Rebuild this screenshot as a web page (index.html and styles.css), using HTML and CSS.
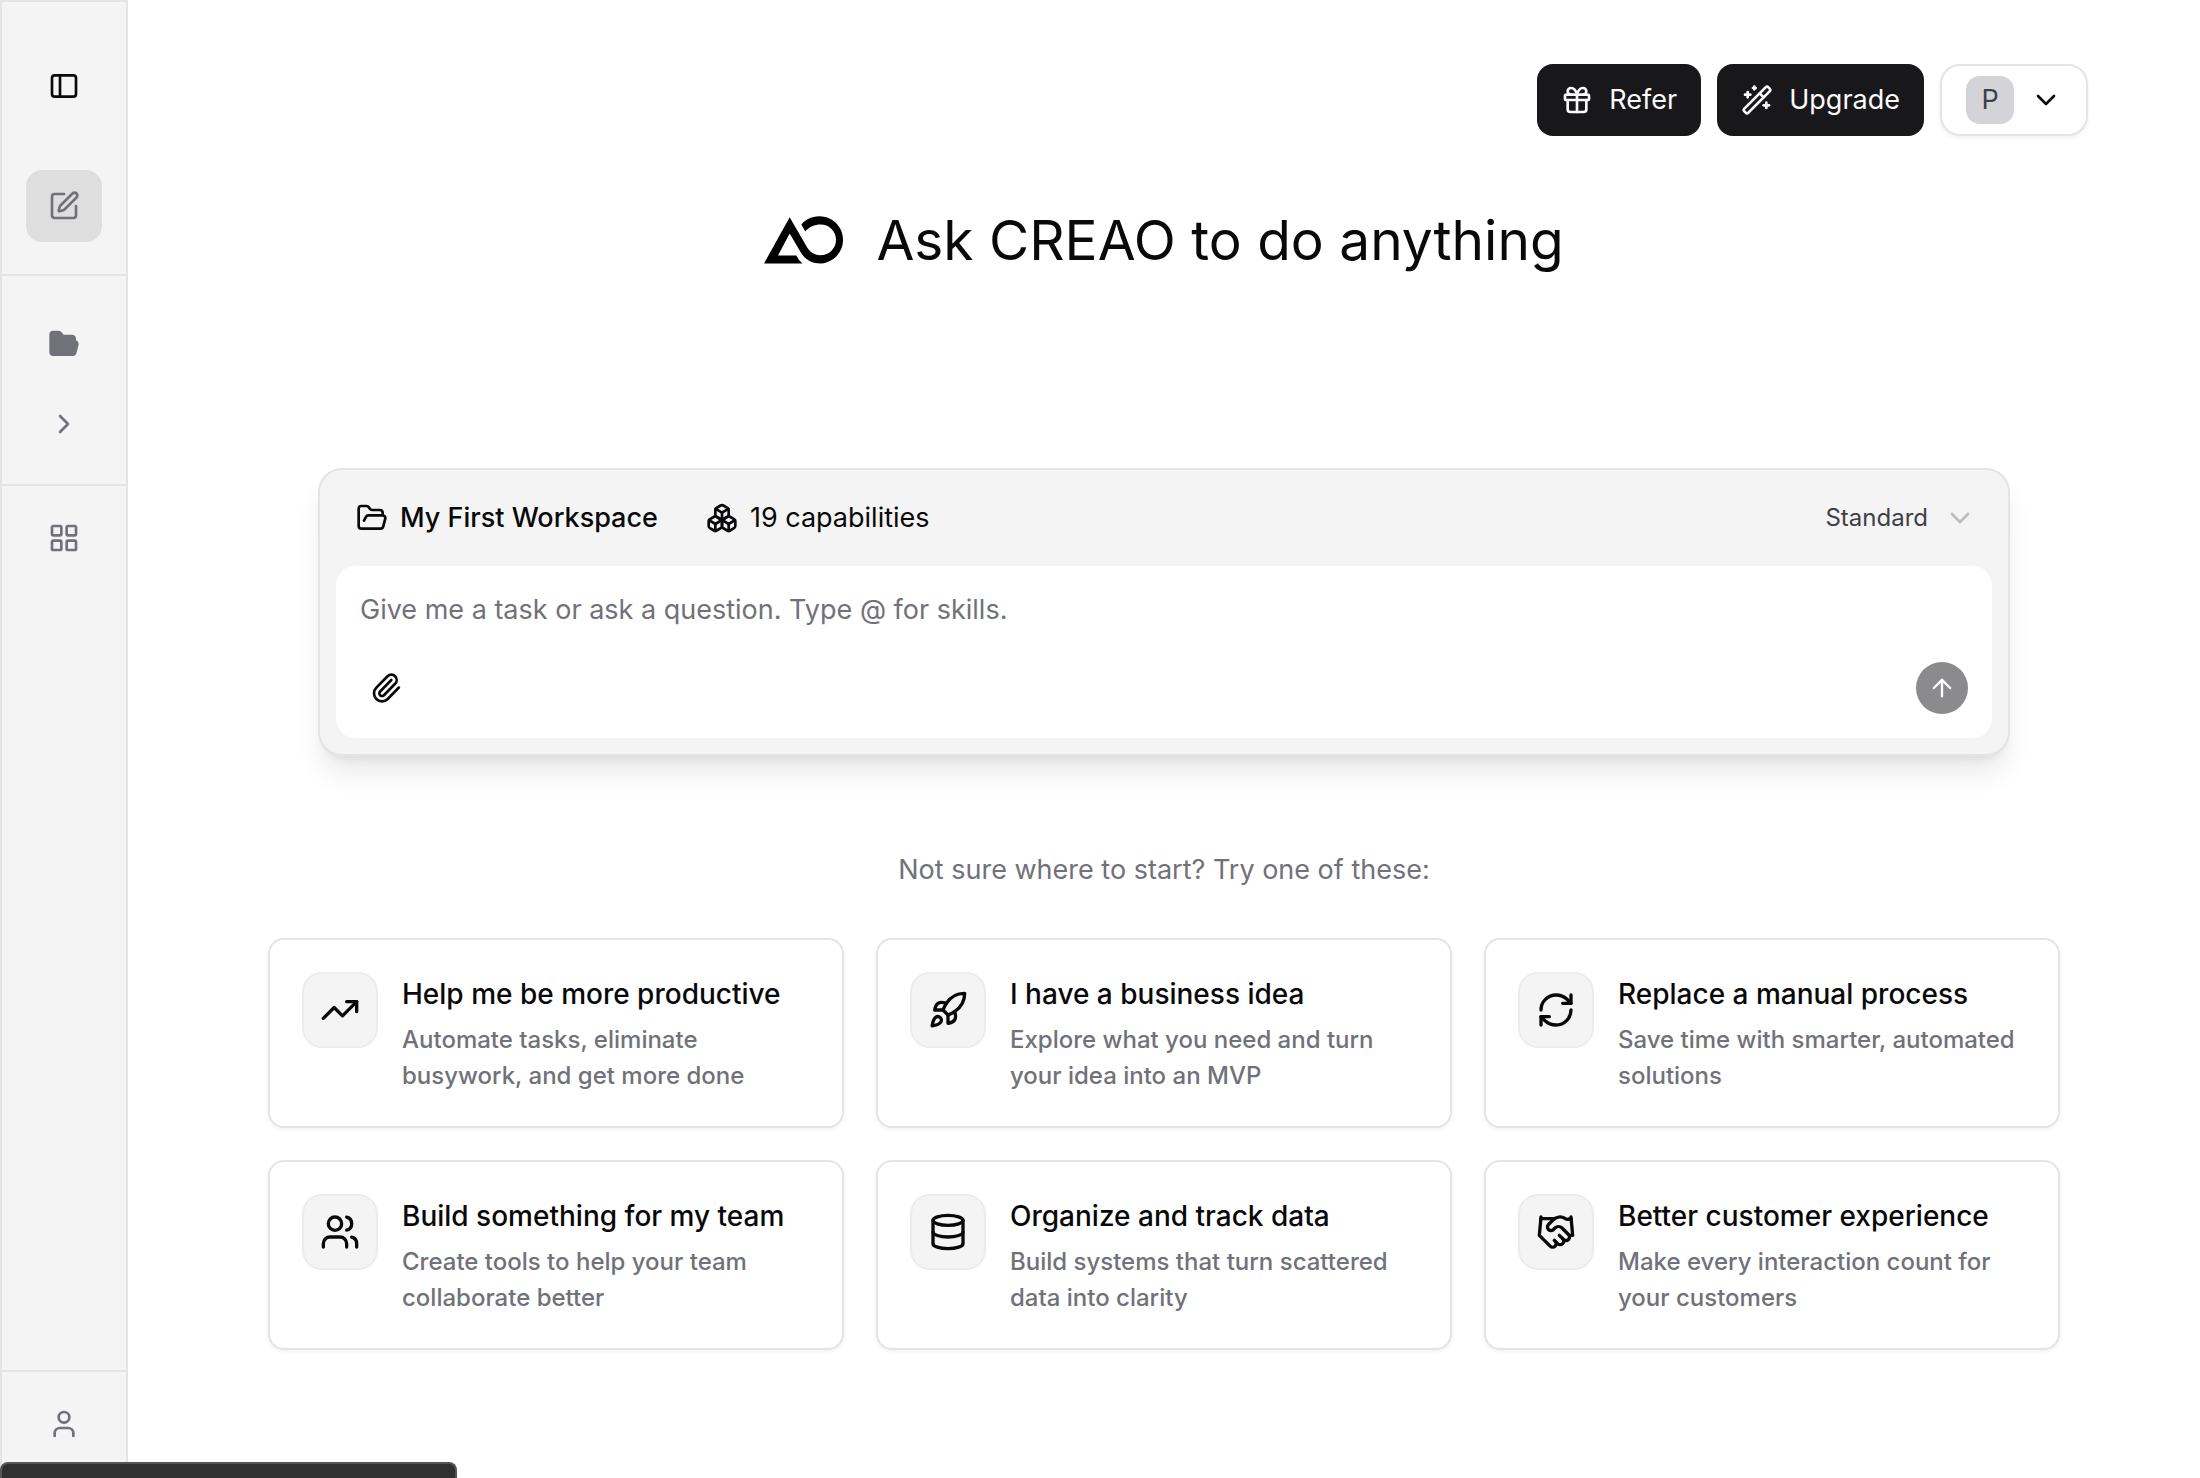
FILE: index.html
```html
<!DOCTYPE html>
<html lang="en">
<head>
	<meta charset="UTF-8">
	<title>CREAO</title>
	<link rel="stylesheet" href="styles.css">
</head>
<body>
	<svg class="sprite" aria-hidden="true">
		<symbol id="chevron-down" viewBox="0 0 24 24"><path d="m6 9 6 6 6-6"/></symbol>
	</svg>

	<aside class="sidebar">
		<div class="side-top">
			<button class="side-btn dark" aria-label="Toggle sidebar">
				<svg class="icon" viewBox="0 0 24 24"><rect width="18" height="16" x="3" y="4" rx="2"/><path d="M9 4v16"/></svg>
			</button>
			<button class="side-btn active" aria-label="New chat">
				<svg class="icon" viewBox="0 0 24 24"><path d="M12 3H5a2 2 0 0 0-2 2v14a2 2 0 0 0 2 2h14a2 2 0 0 0 2-2v-7"/><path d="M18.375 2.625a1 1 0 0 1 3 3l-9.013 9.014a2 2 0 0 1-.853.505l-2.873.84a.5.5 0 0 1-.62-.62l.84-2.873a2 2 0 0 1 .506-.852z"/></svg>
			</button>
		</div>
		<div class="side-folders">
			<button class="side-btn" aria-label="Workspace">
				<svg class="icon filled" viewBox="0 0 24 24"><path d="m6 14 1.5-2.9A2 2 0 0 1 9.24 10H20a2 2 0 0 1 1.94 2.5l-1.54 6a2 2 0 0 1-1.95 1.5H4a2 2 0 0 1-2-2V5a2 2 0 0 1 2-2h3.9a2 2 0 0 1 1.69.9l.81 1.2a2 2 0 0 0 1.67.9H18a2 2 0 0 1 2 2v2"/></svg>
			</button>
			<button class="side-btn" aria-label="Expand">
				<svg class="icon" viewBox="0 0 24 24"><path d="m9 18 6-6-6-6"/></svg>
			</button>
		</div>
		<div class="side-apps">
			<button class="side-btn" aria-label="Apps">
				<svg class="icon" viewBox="0 0 24 24"><rect width="7" height="7" x="3" y="3" rx="1"/><rect width="7" height="7" x="14" y="3" rx="1"/><rect width="7" height="7" x="14" y="14" rx="1"/><rect width="7" height="7" x="3" y="14" rx="1"/></svg>
			</button>
		</div>
		<div class="side-bottom">
			<button class="side-btn" aria-label="Account">
				<svg class="icon" viewBox="0 0 24 24"><path d="M19 21v-2a4 4 0 0 0-4-4H9a4 4 0 0 0-4 4v2"/><circle cx="12" cy="7" r="4"/></svg>
			</button>
		</div>
	</aside>

	<main class="main">
		<header class="topbar">
			<button class="btn">
				<svg class="icon" viewBox="0 0 24 24"><rect x="3" y="8" width="18" height="4" rx="1"/><path d="M12 8v13"/><path d="M19 12v7a2 2 0 0 1-2 2H7a2 2 0 0 1-2-2v-7"/><path d="M7.5 8a2.5 2.5 0 0 1 0-5A4.8 8 0 0 1 12 8a4.8 8 0 0 1 4.5-5 2.5 2.5 0 0 1 0 5"/></svg>
				Refer
			</button>
			<button class="btn">
				<svg class="icon" viewBox="0 0 24 24"><path d="m21.64 3.64-1.28-1.28a1.21 1.21 0 0 0-1.72 0L2.36 18.64a1.21 1.21 0 0 0 0 1.72l1.28 1.28a1.2 1.2 0 0 0 1.72 0L21.64 5.36a1.2 1.2 0 0 0 0-1.72"/><path d="m14 7 3 3"/><path d="M5 6v4"/><path d="M19 14v4"/><path d="M10 2v2"/><path d="M7 8H3"/><path d="M21 16h-4"/><path d="M11 3H9"/></svg>
				Upgrade
			</button>
			<button class="profile" aria-label="Profile">
				<span class="avatar">P</span>
				<svg class="icon"><use href="#chevron-down"/></svg>
			</button>
		</header>

		<h1 class="title">
			<svg class="logo" viewBox="30 45 240 143"><path d="M107 48 30 187h115q-10-8-18-24H72l35-66 34 58c14 22 34 32 59 32a71 71 0 1 0-58-117l12 21c11-14 28-21 46-21a46 46 0 1 1 0 92c-18 0-30-7-40-22z"/></svg>
			Ask CREAO to do anything
		</h1>

		<section class="composer">
			<div class="composer-head">
				<button class="pick strong">
					<svg class="icon" viewBox="0 0 24 24"><path d="m6 14 1.5-2.9A2 2 0 0 1 9.24 10H20a2 2 0 0 1 1.94 2.5l-1.54 6a2 2 0 0 1-1.95 1.5H4a2 2 0 0 1-2-2V5a2 2 0 0 1 2-2h3.9a2 2 0 0 1 1.69.9l.81 1.2a2 2 0 0 0 1.67.9H18a2 2 0 0 1 2 2v2"/></svg>
					My First Workspace
				</button>
				<button class="pick">
					<svg class="icon" viewBox="0 0 24 24"><path d="M2.97 12.92A2 2 0 0 0 2 14.63v3.24a2 2 0 0 0 .97 1.71l3 1.8a2 2 0 0 0 2.06 0L12 19v-5.5l-5-3-4.03 2.42Z"/><path d="m7 16.5-4.74-2.85"/><path d="m7 16.5 5-3"/><path d="M7 16.5v5.17"/><path d="M12 13.5V19l3.97 2.38a2 2 0 0 0 2.06 0l3-1.8a2 2 0 0 0 .97-1.71v-3.24a2 2 0 0 0-.97-1.71L17 10.5l-5 3Z"/><path d="m17 16.5-5-3"/><path d="m17 16.5 4.74-2.85"/><path d="M17 16.5v5.17"/><path d="M7.97 4.42A2 2 0 0 0 7 6.13v4.37l5 3 5-3V6.13a2 2 0 0 0-.97-1.71l-3-1.8a2 2 0 0 0-2.06 0l-3 1.8Z"/><path d="M12 8 7.26 5.15"/><path d="m12 8 4.74-2.85"/><path d="M12 13.5V8"/></svg>
					19 capabilities
				</button>
				<button class="mode">
					Standard
					<svg class="icon"><use href="#chevron-down"/></svg>
				</button>
			</div>
			<div class="composer-body">
				<textarea class="prompt" rows="1" aria-label="Task" placeholder="Give me a task or ask a question. Type @ for skills."></textarea>
				<div class="composer-tools">
					<button class="attach" aria-label="Attach a file">
						<svg class="icon" viewBox="0 0 24 24"><path d="m16 6-8.414 8.586a2 2 0 0 0 2.829 2.829l8.414-8.586a4 4 0 1 0-5.657-5.657l-8.379 8.551a6 6 0 1 0 8.485 8.485l8.379-8.551"/></svg>
					</button>
					<button class="send" aria-label="Send">
						<svg class="icon" viewBox="0 0 24 24"><path d="m5 12 7-7 7 7"/><path d="M12 19V5"/></svg>
					</button>
				</div>
			</div>
		</section>

		<p class="hint">Not sure where to start? Try one of these:</p>

		<div class="cards">
			<button class="card">
				<span class="card-icon"><svg class="icon" viewBox="0 0 24 24"><path d="M16 7h6v6"/><path d="m22 7-8.5 8.5-5-5L2 17"/></svg></span>
				<span class="card-text"><b>Help me be more productive</b><span>Automate tasks, eliminate busywork, and get more done</span></span>
			</button>
			<button class="card">
				<span class="card-icon"><svg class="icon" viewBox="0 0 24 24"><path d="M4.5 16.5c-1.5 1.26-2 5-2 5s3.74-.5 5-2c.71-.84.7-2.13-.09-2.91a2.18 2.18 0 0 0-2.91-.09z"/><path d="m12 15-3-3a22 22 0 0 1 2-3.95A12.88 12.88 0 0 1 22 2c0 2.72-.78 7.5-6 11a22.35 22.35 0 0 1-4 2z"/><path d="M9 12H4s.55-3.03 2-4c1.62-1.08 5 0 5 0"/><path d="M12 15v5s3.03-.55 4-2c1.08-1.62 0-5 0-5"/></svg></span>
				<span class="card-text"><b>I have a business idea</b><span>Explore what you need and turn your idea into an MVP</span></span>
			</button>
			<button class="card">
				<span class="card-icon"><svg class="icon" viewBox="0 0 24 24"><path d="M3 12a9 9 0 0 1 9-9 9.75 9.75 0 0 1 6.74 2.74L21 8"/><path d="M21 3v5h-5"/><path d="M21 12a9 9 0 0 1-9 9 9.75 9.75 0 0 1-6.74-2.74L3 16"/><path d="M8 16H3v5"/></svg></span>
				<span class="card-text"><b>Replace a manual process</b><span>Save time with smarter, automated solutions</span></span>
			</button>
			<button class="card">
				<span class="card-icon"><svg class="icon" viewBox="0 0 24 24"><path d="M16 21v-2a4 4 0 0 0-4-4H6a4 4 0 0 0-4 4v2"/><path d="M16 3.128a4 4 0 0 1 0 7.744"/><path d="M22 21v-2a4 4 0 0 0-3-3.87"/><circle cx="9" cy="7" r="4"/></svg></span>
				<span class="card-text"><b>Build something for my team</b><span>Create tools to help your team collaborate better</span></span>
			</button>
			<button class="card">
				<span class="card-icon"><svg class="icon" viewBox="0 0 24 24"><ellipse cx="12" cy="5" rx="9" ry="3"/><path d="M3 5v14a9 3 0 0 0 18 0V5"/><path d="M3 12a9 3 0 0 0 18 0"/></svg></span>
				<span class="card-text"><b>Organize and track data</b><span>Build systems that turn scattered data into clarity</span></span>
			</button>
			<button class="card">
				<span class="card-icon"><svg class="icon" viewBox="0 0 24 24"><path d="m11 17 2 2a1 1 0 1 0 3-3"/><path d="m14 14 2.5 2.5a1 1 0 1 0 3-3l-3.88-3.88a3 3 0 0 0-4.24 0l-.88.88a1 1 0 1 1-3-3l2.81-2.81a5.79 5.79 0 0 1 7.06-.87l.47.28a2 2 0 0 0 1.42.25L21 4"/><path d="m21 3 1 11h-2"/><path d="M3 3 2 14l6.5 6.5a1 1 0 1 0 3-3"/><path d="M3 4h8"/></svg></span>
				<span class="card-text"><b>Better customer experience</b><span>Make every interaction count for your customers</span></span>
			</button>
		</div>
	</main>

	<div class="status-bar"></div>
</body>
</html>
```
FILE: styles.css
```css
*{ box-sizing: border-box; margin: 0; padding: 0; }
body{ display: flex; height: 100vh; overflow: hidden; background: #fff; color: #09090b; font-family: Inter, "Liberation Sans", sans-serif; font-size: 27px; line-height: 40px; }
button{ border: 0; background: none; color: inherit; font: inherit; cursor: pointer; display: flex; align-items: center; }
.sprite{ display: none; }
.icon{ width: 32px; height: 32px; flex: none; fill: none; stroke: currentColor; stroke-width: 2; stroke-linecap: round; stroke-linejoin: round; }

/* sidebar */
.sidebar{ display: flex; flex-direction: column; flex: none; width: 128px; background: #f4f4f4; border: 2px solid #e4e4e7; border-bottom: 0; color: #71717a; }
.side-top, .side-folders, .side-apps, .side-bottom{ display: flex; flex-direction: column; align-items: center; }
.side-top{ gap: 48px; padding: 48px 0 32px; border-bottom: 2px solid #e4e4e7; }
.side-folders{ gap: 8px; padding: 32px 0 24px; border-bottom: 2px solid #e4e4e7; }
.side-apps{ padding-top: 16px; }
.side-bottom{ margin-top: auto; padding: 16px 0 18px; border-top: 2px solid #e4e4e7; }
.side-btn{ width: 76px; height: 72px; justify-content: center; border-radius: 16px; }
.side-btn.active{ background: #dedede; }
.dark{ color: #09090b; }
.filled{ fill: currentColor; }

/* main column */
.main{ flex: 1; display: flex; flex-direction: column; align-items: center; padding: 64px 112px 0; }
.topbar{ display: flex; gap: 16px; align-self: flex-end; }
.btn{ gap: 16px; height: 72px; padding: 0 24px; border-radius: 16px; background: #18181b; color: #fafafa; }
.profile{ gap: 16px; height: 72px; padding: 0 24px; border: 2px solid #e4e4e7; border-radius: 20px; box-shadow: 0 2px 4px rgba(0,0,0,0.06); }
.avatar{ width: 48px; height: 48px; line-height: 48px; border-radius: 14px; background: #d4d4d8; color: #3f3f46; }

.title{ display: flex; align-items: center; gap: 32px; margin-top: 64px; font-size: 55px; line-height: 80px; font-weight: 400; }
.logo{ width: 80px; height: 48px; }

.composer{ width: 100%; max-width: 1692px; margin-top: 188px; padding: 0 16px 16px; background: #f4f4f4; border: 2px solid #e4e4e7; border-radius: 24px; box-shadow: 0 20px 30px -6px rgba(0,0,0,0.1), 0 8px 12px -8px rgba(0,0,0,0.1); }
.composer-head{ display: flex; align-items: center; gap: 48px; height: 96px; padding: 0 16px 0 20px; }
.pick{ gap: 12px; }
.strong{ font-weight: 500; }
.mode{ gap: 16px; margin-left: auto; font-size: 24px; color: #3f3f46; }
.mode .icon{ color: #bdbdbd; }
.composer-body{ padding: 24px; border-radius: 20px; background: #fff; }
.prompt{ display: block; width: 100%; height: 40px; border: 0; outline: 0; resize: none; overflow: hidden; background: none; font: inherit; color: inherit; }
.prompt::placeholder{ color: #71717a; opacity: 1; }
.composer-tools{ display: flex; align-items: center; justify-content: space-between; height: 52px; margin-top: 32px; }
.attach{ padding: 0 10px; }
.send{ width: 52px; height: 52px; justify-content: center; border-radius: 50%; background: #8b8b8d; color: #fff; }
.send .icon{ width: 28px; height: 28px; }

.hint{ margin-top: 94px; color: #71717a; }

/* suggestion cards */
.cards{ display: grid; grid-template-columns: repeat(3, 1fr); gap: 32px; width: 100%; max-width: 1792px; margin-top: 48px; }
.card{ align-items: flex-start; gap: 24px; padding: 32px; border: 2px solid #e4e4e7; border-radius: 16px; background: #fff; text-align: left; box-shadow: 0 2px 4px rgba(0,0,0,0.05); }
.card-icon{ display: flex; align-items: center; justify-content: center; flex: none; width: 76px; height: 76px; border: 2px solid #ececee; border-radius: 20px; background: #f4f4f4; }
.card-icon .icon{ width: 40px; height: 40px; }
.card-text{ padding-top: 2px; }
.card-text b{ display: block; margin-bottom: 8px; font-size: 28px; font-weight: 500; }
.card-text span{ display: block; font-size: 24px; line-height: 36px; font-weight: 500; color: #71717a; }

/* dark strip over the bottom edge */
.status-bar{ position: absolute; left: 0; bottom: 0; width: 457px; height: 16px; border: 2px solid #555; border-bottom: 0; border-radius: 8px 8px 0 0; background: #303030; }
```
